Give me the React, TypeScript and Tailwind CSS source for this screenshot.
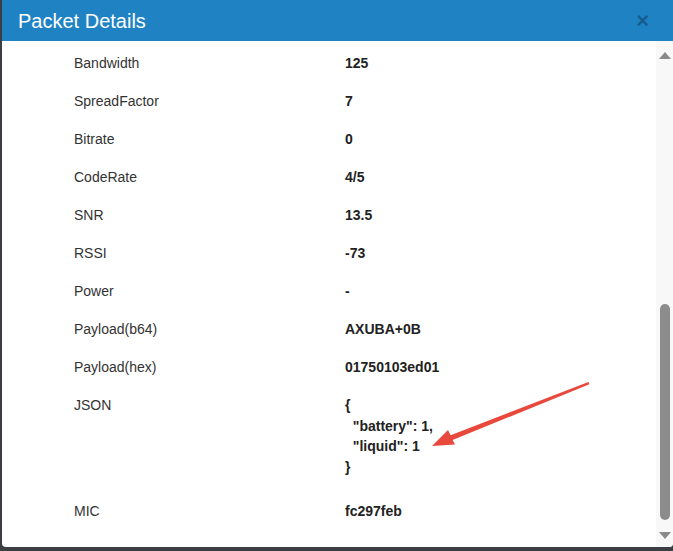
import React from "react";

const ROWS: { label: string; value: string }[] = [
  { label: "Bandwidth", value: "125" },
  { label: "SpreadFactor", value: "7" },
  { label: "Bitrate", value: "0" },
  { label: "CodeRate", value: "4/5" },
  { label: "SNR", value: "13.5" },
  { label: "RSSI", value: "-73" },
  { label: "Power", value: "-" },
  { label: "Payload(b64)", value: "AXUBA+0B" },
  { label: "Payload(hex)", value: "01750103ed01" },
];

const JSON_TEXT = `{
  "battery": 1,
  "liquid": 1
}`;

function Row({ label, children }: { label: string; children: React.ReactNode }) {
  return (
    <div className="grid grid-cols-[271px_1fr] py-[9px] leading-[20px]">
      <div className="text-[#333]">{label}</div>
      <div className="font-bold text-[#222]">{children}</div>
    </div>
  );
}

export default function App() {
  return (
    <div
      className="h-screen w-full bg-[#3b3f43] text-[14px]"
      style={{ fontFamily: '"Liberation Sans", Arial, sans-serif' }}
    >
      <div className="relative ml-[2px] flex h-[547px] flex-col overflow-hidden rounded-b-[4px] bg-white">
        {/* ── Header ─────────────────────────────── */}
        <div className="flex h-[41px] items-center justify-between bg-[#1f83c3] pl-[16px] pr-[24px]">
          <h1 className="text-[20px] leading-none text-white">Packet Details</h1>
          <span className="text-[22px] font-bold leading-none text-[#12507d]/75">×</span>
        </div>

        {/* ── Body ──────────────────────────────── */}
        <div className="flex flex-1 overflow-hidden">
          <div className="flex-1 pl-[72px] pt-[3px]">
            {ROWS.map((r) => (
              <Row key={r.label} label={r.label}>
                {r.value}
              </Row>
            ))}
            <Row label="JSON">
              <pre
                className="mb-[6px] whitespace-pre font-bold leading-[20.6px]"
                style={{ fontFamily: '"Liberation Sans", Arial, sans-serif' }}
              >
                {JSON_TEXT}
              </pre>
            </Row>
            <Row label="MIC">fc297feb</Row>
          </div>

          {/* scrollbar */}
          <div className="flex w-[17px] flex-col items-center bg-[#f8f8f8] pb-[8px] pt-[11px]">
            <div className="h-0 w-0 border-x-[6px] border-b-[7px] border-x-transparent border-b-[#8a8a8a]" />
            <div className="flex-1" />
            <div className="h-[216px] w-[10px] rounded-full bg-[#8c8c8c]" />
            <div className="mt-[12px] h-0 w-0 border-x-[6px] border-t-[7px] border-x-transparent border-t-[#8a8a8a]" />
          </div>
        </div>

        {/* ── Annotation arrow ──────────────────── */}
        <svg
          className="pointer-events-none absolute left-[-2px] top-0"
          width="673"
          height="551"
          viewBox="0 0 673 551"
        >
          <polygon
            points="432,446 448,430 450.6,435.2 588.4,382 589.4,384.2 452.6,440 455,444.5"
            fill="#e8493c"
          />
        </svg>
      </div>
    </div>
  );
}
